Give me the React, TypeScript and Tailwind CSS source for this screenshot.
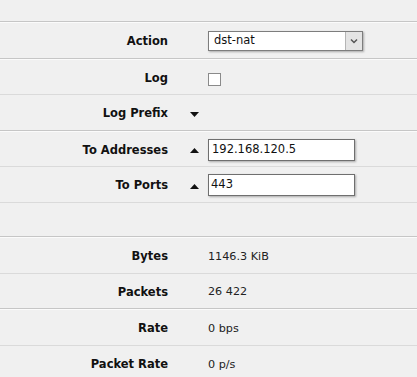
import React from "react";

const font = { fontFamily: '"DejaVu Sans", Verdana, sans-serif' };

function Double() {
  return (
    <div>
      <div className="h-px bg-[#c6c6c6]" />
      <div className="h-px bg-[#fbfbfb]" />
    </div>
  );
}

function Thin() {
  return <div className="h-px bg-[#dadada]" />;
}

function Row({
  label,
  h,
  icon,
  children,
}: {
  label: string;
  h: string;
  icon?: React.ReactNode;
  children?: React.ReactNode;
}) {
  return (
    <div className={`flex items-center pt-[3px] ${h}`}>
      <div className="w-[168px] text-right text-[11.5px] font-bold text-[#111]">{label}</div>
      <div className="w-[40px] flex items-center justify-start pl-[22px]">{icon}</div>
      <div className="flex items-center text-[11.2px] text-[#222]">{children}</div>
    </div>
  );
}

function Up() {
  return (
    <svg width="9" height="5" viewBox="0 0 9 5" className="block">
      <polygon points="0,5 9,5 4.5,0" fill="#111" />
    </svg>
  );
}

function Down() {
  return (
    <svg width="9" height="5" viewBox="0 0 9 5" className="block">
      <polygon points="0,0 9,0 4.5,5" fill="#111" />
    </svg>
  );
}

export default function App() {
  return (
    <div className="w-[417px] h-[377px] overflow-hidden bg-[#f0f0f0]" style={font}>
      <div className="h-[21px]" />
      <Double />
      <Row label="Action" h="h-[35px]">
        <div className="relative w-[155px] h-[20px] -mt-[2px] bg-white border border-[#7d7d7d] shadow-[1px_1px_2px_rgba(0,0,0,0.3)] flex items-center">
          <span className="pl-[5px] text-[11.5px] text-[#111]">dst-nat</span>
          <div className="absolute right-0 top-0 h-full w-[17px] bg-[#e4e4e4] border-l border-[#b5b5b5] flex items-center justify-center">
            <svg width="8" height="6" viewBox="0 0 8 6">
              <polyline points="1,1.5 4,4.5 7,1.5" fill="none" stroke="#555" strokeWidth="1.5" />
            </svg>
          </div>
        </div>
      </Row>
      <Double />
      <Row label="Log" h="h-[34px]">
        <div className="w-[13px] h-[13px] mt-[1px] bg-white border border-[#8a8a8a]" />
      </Row>
      <Thin />
      <Row label="Log Prefix" h="h-[35px]" icon={<Down />} />
      <Double />
      <Row label="To Addresses" h="h-[34px]" icon={<Up />}>
        <div className="w-[147px] h-[22px] -mt-[2px] bg-white border border-[#6f6f6f] shadow-[1px_1px_2px_rgba(0,0,0,0.3)] flex items-center pl-[3px] text-[11.5px] text-[#111]">
          192.168.120.5
        </div>
      </Row>
      <Thin />
      <Row label="To Ports" h="h-[35px]" icon={<Up />}>
        <div className="w-[147px] h-[22px] -mt-[2px] bg-white border border-[#6f6f6f] shadow-[1px_1px_2px_rgba(0,0,0,0.3)] flex items-center pl-[2px] text-[11.5px] text-[#111]">
          443
        </div>
      </Row>
      <Thin />
      <div className="h-[33px]" />
      <Double />
      <Row label="Bytes" h="h-[35px]">1146.3 KiB</Row>
      <Thin />
      <Row label="Packets" h="h-[34px]">26 422</Row>
      <Double />
      <Row label="Rate" h="h-[35px]">0 bps</Row>
      <Thin />
      <Row label="Packet Rate" h="h-[35px]">0 p/s</Row>
    </div>
  );
}
